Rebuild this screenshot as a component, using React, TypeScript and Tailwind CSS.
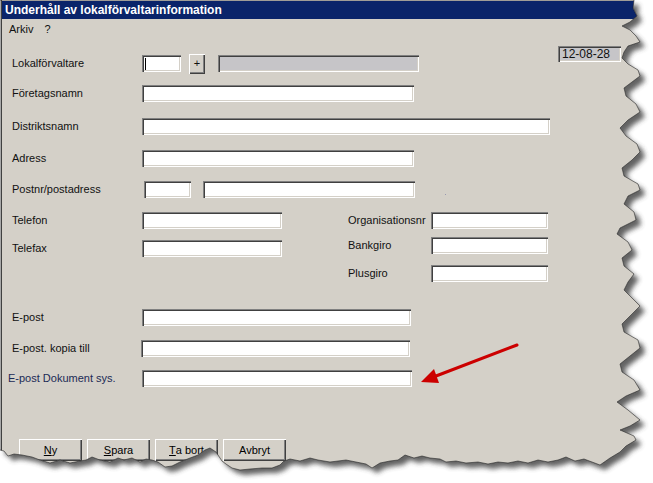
import React from 'react'

const sunken =
  'bg-white shadow-[inset_1px_1px_0_#808080,inset_2px_2px_0_#404040,inset_-1px_-1px_0_#ffffff,inset_-2px_-2px_0_#d4d0c8]'
const sunkenGray =
  'bg-[#c6c5c8] shadow-[inset_1px_1px_0_#808080,inset_2px_2px_0_#404040,inset_-1px_-1px_0_#ffffff,inset_-2px_-2px_0_#d4d0c8]'
const raised =
  'bg-[#d4d0c8] shadow-[inset_1px_1px_0_#ffffff,inset_-1px_-1px_0_#404040,inset_-2px_-2px_0_#808080]'

// torn paper outline of the screenshot (window shape)
const rightEdge = [
  [634, 0], [633, 8], [637, 16], [630, 22], [622, 26], [630, 30], [636, 36], [640, 42], [628, 46], [624, 52],
  [622, 58], [628, 64], [638, 70], [640, 76], [632, 82], [624, 88], [626, 96], [636, 104], [640, 112],
  [628, 120], [620, 128], [626, 136], [637, 144], [640, 152], [632, 160], [622, 168], [624, 176], [638, 184],
  [640, 190], [628, 196], [624, 204], [634, 212], [636, 220], [620, 228], [617, 234], [628, 242], [632, 250],
  [622, 258], [624, 266], [634, 274], [628, 282], [624, 290], [632, 298], [640, 306], [630, 316], [622, 324],
  [624, 332], [638, 340], [640, 348], [630, 356], [620, 364], [622, 372], [634, 380], [640, 390], [626, 396],
  [617, 402], [628, 410], [640, 420], [630, 426], [620, 430], [634, 436], [636, 440], [626, 446], [620, 452],
  [610, 458], [600, 465],
]
const bottomEdge = [
  [592, 462], [584, 459], [575, 461], [566, 457], [558, 460], [548, 462], [538, 460], [528, 463], [518, 461],
  [508, 463], [498, 462], [488, 464], [478, 462], [466, 463], [456, 461], [446, 462], [440, 459], [430, 458],
  [422, 456], [414, 458], [405, 455], [398, 460], [390, 461], [380, 463], [372, 468], [366, 464], [356, 462],
  [346, 460], [338, 461], [330, 462], [318, 460], [310, 458], [300, 461], [290, 459], [284, 461], [280, 465],
  [272, 468], [262, 468], [250, 469], [240, 470], [232, 468], [226, 464], [222, 461], [216, 452], [210, 448],
  [205, 450], [198, 455], [190, 458], [180, 462], [172, 466], [165, 467], [158, 462], [152, 460], [146, 459],
  [140, 462], [132, 458], [124, 460], [118, 458], [110, 462], [100, 460], [92, 457], [86, 460], [80, 461],
  [70, 463], [60, 460], [50, 463], [40, 460], [32, 457], [22, 455], [14, 454], [8, 456], [4, 451], [0, 450],
]
const shape =
  'M0 0 ' + [...rightEdge, ...bottomEdge].map(([x, y]) => `L${x} ${y}`).join(' ') + ' Z'
const outside = 'M-20 -20 H700 V520 H-20 Z ' + shape

function TornEdge() {
  return (
    <svg className="pointer-events-none absolute inset-0" width="653" height="483" viewBox="0 0 653 483">
      <defs>
        <filter id="blur" x="-10%" y="-10%" width="120%" height="120%">
          <feGaussianBlur stdDeviation="2.5" />
        </filter>
        <clipPath id="outside">
          <path d={outside} clipRule="evenodd" />
        </clipPath>
      </defs>
      <path d={outside} fill="#ffffff" fillRule="evenodd" />
      <g clipPath="url(#outside)">
        <path d={shape} transform="translate(5 5)" fill="#3a3a3a" opacity="0.8" filter="url(#blur)" />
      </g>
      <path d={shape} fill="none" stroke="#1a1a1a" strokeWidth="0.8" opacity="0.7" />
    </svg>
  )
}

function Arrow() {
  return (
    <svg className="pointer-events-none absolute inset-0" width="653" height="483" viewBox="0 0 653 483">
      <line x1="517" y1="345" x2="436" y2="376" stroke="#cc0000" strokeWidth="3" strokeLinecap="round" />
      <polygon points="421,382 434,369 439,383" fill="#cc0000" />
    </svg>
  )
}

function Field({ w, gray, children }: { w: string; gray?: boolean; children?: React.ReactNode }) {
  return <div className={`${w} h-[17px] shrink-0 ${gray ? sunkenGray : sunken} relative`}>{children}</div>
}

function Btn({ children }: { children: React.ReactNode }) {
  return (
    <div className={`w-[63px] h-[22px] flex items-center justify-center text-black ${raised}`}>{children}</div>
  )
}

export default function App() {
  return (
    <div className="relative w-[653px] h-[483px] overflow-hidden bg-white font-['Liberation_Sans',Arial,sans-serif] text-[11px] text-[#111]">
      <div className="w-full h-full flex flex-col bg-[#d4d0c8] shadow-[inset_1px_0_0_#dfdfdf,inset_2px_0_0_#404040]">
        {/* title bar */}
        <div className="mt-[1px] ml-[2px] h-[18px] bg-[#0a246a] flex items-center pl-[3px] text-white font-bold text-[12px]">
          Underhåll av lokalförvaltarinformation
        </div>

        {/* menu */}
        <div className="h-[20px] flex items-center pl-[9px] gap-[11px]">
          <span>Arkiv</span>
          <span>?</span>
        </div>

        {/* Lokalförvaltare */}
        <div className="mt-[16px] h-[17px] flex items-center pl-[12px]">
          <span className="w-[130px] shrink-0">Lokalförvaltare</span>
          <Field w="w-[39px]">
            <div className="absolute left-[3px] top-[3px] w-px h-[12px] bg-black" />
          </Field>
          <div className={`ml-[8px] w-[16px] h-[20px] flex items-center justify-center ${raised}`}>+</div>
          <div className="ml-[13px]">
            <Field w="w-[201px]" gray />
          </div>
          <div
            className={`ml-auto mr-[32px] self-start -mt-[9px] w-[63px] h-[16px] flex items-center pl-[4px] text-[12px] ${sunkenGray}`}
          >
            12-08-28
          </div>
        </div>

        <div className="mt-[13px] h-[17px] flex items-center pl-[12px]">
          <span className="w-[130px] shrink-0">Företagsnamn</span>
          <Field w="w-[272px]" />
        </div>

        <div className="mt-[16px] h-[17px] flex items-center pl-[12px]">
          <span className="w-[130px] shrink-0">Distriktsnamn</span>
          <Field w="w-[408px]" />
        </div>

        <div className="mt-[15px] h-[17px] flex items-center pl-[12px]">
          <span className="w-[130px] shrink-0">Adress</span>
          <Field w="w-[272px]" />
        </div>

        <div className="mt-[14px] h-[17px] flex items-center pl-[12px]">
          <span className="w-[132px] shrink-0">Postnr/postadress</span>
          <Field w="w-[47px]" />
          <div className="ml-[12px]">
            <Field w="w-[212px]" />
          </div>
          <div className="ml-[30px] mt-[10px] w-px h-px bg-[#9a9ab0]" />
        </div>

        {/* phone / org section */}
        <div className="mt-[14px] flex pl-[12px]">
          <div className="flex flex-col">
            <div className="h-[17px] flex items-center">
              <span className="w-[130px] shrink-0">Telefon</span>
              <Field w="w-[140px]" />
            </div>
            <div className="mt-[11px] h-[17px] flex items-center">
              <span className="w-[130px] shrink-0">Telefax</span>
              <Field w="w-[140px]" />
            </div>
          </div>
          <div className="ml-[66px] flex flex-col">
            <div className="h-[17px] flex items-center">
              <span className="w-[83px] shrink-0">Organisationsnr</span>
              <Field w="w-[117px]" />
            </div>
            <div className="mt-[8px] h-[17px] flex items-center">
              <span className="w-[83px] shrink-0">Bankgiro</span>
              <Field w="w-[117px]" />
            </div>
            <div className="mt-[11px] h-[17px] flex items-center">
              <span className="w-[83px] shrink-0">Plusgiro</span>
              <Field w="w-[117px]" />
            </div>
          </div>
        </div>

        <div className="mt-[27px] h-[17px] flex items-center pl-[12px]">
          <span className="w-[130px] shrink-0">E-post</span>
          <Field w="w-[269px]" />
        </div>

        <div className="mt-[14px] h-[17px] flex items-center pl-[12px]">
          <span className="w-[129px] shrink-0">E-post. kopia till</span>
          <Field w="w-[269px]" />
        </div>

        <div className="mt-[13px] h-[17px] flex items-center pl-[8px]">
          <span className="w-[134px] shrink-0 text-[#1b2a55]">E-post Dokument sys.</span>
          <Field w="w-[270px]" />
        </div>

        {/* buttons */}
        <div className="mt-[52px] flex pl-[19px] gap-[5px]">
          <Btn>
            <span className="underline">N</span>y
          </Btn>
          <Btn>
            <span className="underline">S</span>para
          </Btn>
          <Btn>
            <span className="underline">T</span>a bort
          </Btn>
          <Btn>Avbryt</Btn>
        </div>
      </div>

      <TornEdge />
      <Arrow />
    </div>
  )
}
